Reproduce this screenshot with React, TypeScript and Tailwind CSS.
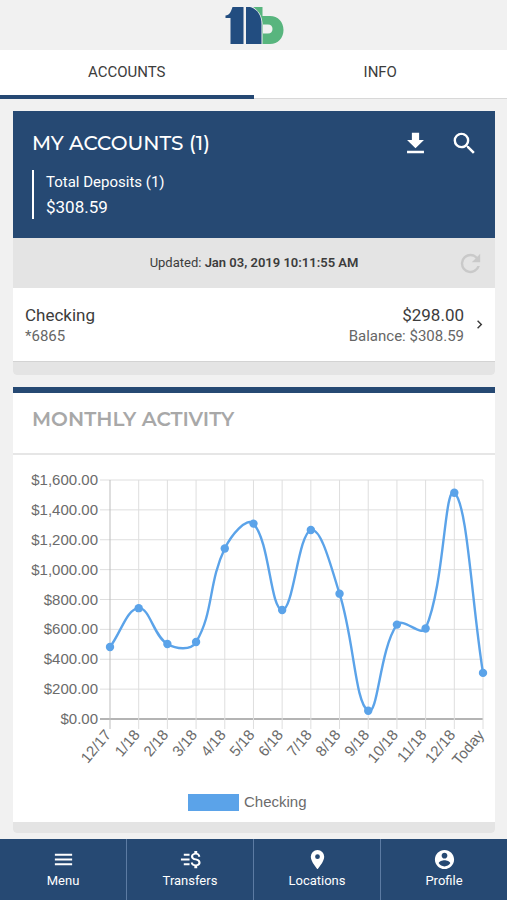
import type { ReactNode } from "react";

const activity = [
  { label: "12/17", value: 482 },
  { label: "1/18", value: 742 },
  { label: "2/18", value: 502 },
  { label: "3/18", value: 515 },
  { label: "4/18", value: 1141 },
  { label: "5/18", value: 1308 },
  { label: "6/18", value: 730 },
  { label: "7/18", value: 1265 },
  { label: "8/18", value: 839 },
  { label: "9/18", value: 55 },
  { label: "10/18", value: 632 },
  { label: "11/18", value: 606 },
  { label: "12/18", value: 1515 },
  { label: "Today", value: 308.59 },
];

const ticks = [1600, 1400, 1200, 1000, 800, 600, 400, 200, 0];

const plot = { left: 97, right: 470, top: 25, bottom: 264 };

const xAt = (i: number) => plot.left + (i * (plot.right - plot.left)) / (activity.length - 1);
const yAt = (v: number) => plot.bottom - (v / 1600) * (plot.bottom - plot.top);

const points = activity.map((d, i) => ({ x: xAt(i), y: yAt(d.value) }));

function smoothPath(pts: { x: number; y: number }[], tension = 0.4) {
  const controls = pts.map((cur, i) => {
    const prev = pts[i - 1] ?? cur;
    const next = pts[i + 1] ?? cur;
    const d01 = Math.hypot(cur.x - prev.x, cur.y - prev.y);
    const d12 = Math.hypot(next.x - cur.x, next.y - cur.y);
    const fa = (tension * d01) / (d01 + d12);
    const fb = (tension * d12) / (d01 + d12);
    return {
      inX: cur.x - fa * (next.x - prev.x),
      inY: cur.y - fa * (next.y - prev.y),
      outX: cur.x + fb * (next.x - prev.x),
      outY: cur.y + fb * (next.y - prev.y),
    };
  });
  return pts
    .map((p, i) => {
      if (i === 0) return `M${p.x} ${p.y}`;
      const a = controls[i - 1];
      const b = controls[i];
      return `C${a.outX} ${a.outY} ${b.inX} ${b.inY} ${p.x} ${p.y}`;
    })
    .join(" ");
}

function Icon({ className, children }: { className: string; children: ReactNode }) {
  return (
    <svg viewBox="0 0 24 24" fill="currentColor" className={className} aria-hidden="true">
      {children}
    </svg>
  );
}

function Logo() {
  return (
    <svg viewBox="0 0 60 38" className="h-[38px] w-[60px]" role="img" aria-label="11b">
      <path fill="#58b57e" fillRule="evenodd" d="M29 1h9.500v9H46c8 0 13.500 6 13.500 14S54 38 46 38h-7.500V17C38 9 34 4 29 1zM39 18.500v9h5c3 0 4.500-2 4.500-4.500s-1.500-4.500-4.500-4.500z" />
      <path fill="#224d80" d="M12 1h7.500v37H6.500V12H1.500V9.500C5.500 9 7 6 8.500 1z" />
      <path fill="#224d80" d="M22 1h4c7 2 11.500 8 11.500 17v20H22z" />
    </svg>
  );
}

function ActivityChart() {
  return (
    <svg viewBox="0 0 482 367" className="block w-full font-['Liberation_Sans',Arial,sans-serif] text-[15px]" role="img" aria-label="Monthly activity">
      {ticks.map((t) => (
        <g key={t}>
          <line
            x1={plot.left - 10}
            x2={plot.right}
            y1={yAt(t)}
            y2={yAt(t)}
            stroke={t === 0 ? "#b4b4b4" : "#dedede"}
            strokeWidth={t === 0 ? 2 : 1}
          />
          <text x={85} y={yAt(t) + 5} textAnchor="end" fill="#6b6b6b">
            {`$${t.toLocaleString("en-US")}.00`}
          </text>
        </g>
      ))}
      {points.map((p, i) => (
        <g key={activity[i].label}>
          <line x1={p.x} x2={p.x} y1={plot.top} y2={plot.bottom + 10} stroke={i === 0 ? "#bdbdbd" : "#dedede"} />
          <text
            transform={`translate(${p.x - 2} ${plot.bottom + 13}) rotate(-50)`}
            y={5}
            textAnchor="end"
            fill="#6b6b6b"
          >
            {activity[i].label}
          </text>
        </g>
      ))}
      <path d={smoothPath(points)} fill="none" stroke="#5ba3e9" strokeWidth="2.4" />
      {points.map((p) => (
        <circle key={p.x} cx={p.x} cy={p.y} r="4.2" fill="#5ba3e9" />
      ))}
      <rect x="175" y="339" width="51" height="17" fill="#5ba3e9" />
      <text x="231" y="352" fill="#6b6b6b">Checking</text>
    </svg>
  );
}

function NavItem({ label, children }: { label: string; children: ReactNode }) {
  return (
    <a href="#" className="flex flex-1 flex-col items-center border-l border-[#5c7ba3] pt-[9px] first:border-l-0">
      <Icon className="size-[23px]">{children}</Icon>
      <span className="text-[13px] leading-5">{label}</span>
    </a>
  );
}

export default function App() {
  return (
    <div className="flex min-h-screen flex-col bg-[#f1f1f1] font-[Roboto,sans-serif] text-[#3c3c3c]">
      <header className="flex h-[50px] items-center justify-center">
        <Logo />
      </header>

      <nav className="flex h-[49px] border-b border-[#d8d8d8] bg-white text-[15px]">
        <a href="#" className="-mb-px flex flex-1 items-center justify-center border-b-4 border-[#254873]">
          ACCOUNTS
        </a>
        <a href="#" className="-mb-px flex flex-1 items-center justify-center border-b-4 border-transparent">
          INFO
        </a>
      </nav>

      <main className="flex flex-1 flex-col gap-3 pt-3 pr-3 pb-[6px] pl-[13px]">
        <section className="overflow-hidden rounded-b bg-white">
          <div className="h-[127px] bg-[#264973] pt-[17px] pr-4 pl-[19px] text-white">
            <div className="flex items-center justify-between">
              <h1 className="font-[Montserrat,Inter,sans-serif] text-[20px] leading-[30px] font-medium">MY ACCOUNTS (1)</h1>
              <div className="flex gap-5">
                <button aria-label="Download">
                  <Icon className="size-[29px]">
                    <path d="M19 9h-4V3H9v6H5l7 7 7-7zM5 18v2h14v-2H5z" />
                  </Icon>
                </button>
                <button aria-label="Search">
                  <Icon className="size-[29px]">
                    <path d="M15.5 14h-.79l-.28-.27A6.47 6.47 0 0 0 16 9.5 6.5 6.5 0 1 0 9.5 16c1.61 0 3.09-.59 4.23-1.57l.27.28v.79l5 4.99L20.49 19l-4.99-5zm-6 0C7.01 14 5 11.99 5 9.5S7.01 5 9.5 5 14 7.01 14 9.5 11.99 14 9.5 14z" />
                  </Icon>
                </button>
              </div>
            </div>
            <div className="mt-3 border-l-2 border-white pl-3">
              <p className="text-[15px] leading-[25px]">Total Deposits (1)</p>
              <p className="text-[17px] leading-6">$308.59</p>
            </div>
          </div>

          <div className="flex h-[50px] items-center bg-[#e4e4e4] pr-[10px] pl-[39px]">
            <p className="flex-1 text-center text-[13px]">
              Updated: <b className="font-semibold">Jan 03, 2019 10:11:55 AM</b>
            </p>
            <button aria-label="Refresh" className="text-[#c9c9c9]">
              <Icon className="size-[29px]">
                <path d="M17.65 6.35A7.96 7.96 0 0 0 12 4a8 8 0 1 0 7.73 10h-2.08A6 6 0 1 1 12 6c1.66 0 3.14.69 4.22 1.78L13 11h7V4l-2.35 2.35z" />
              </Icon>
            </button>
          </div>

          <a href="#" className="flex h-[73px] items-center pr-[7px] pl-3">
            <div className="flex-1">
              <p className="text-[17px] leading-[22px]">Checking</p>
              <p className="text-[15px] leading-5 text-[#666]">*6865</p>
            </div>
            <div className="text-right">
              <p className="text-[17px] leading-[22px]">$298.00</p>
              <p className="text-[15px] leading-5 text-[#666]">Balance: $308.59</p>
            </div>
            <Icon className="ml-[7px] size-[17px]">
              <path d="M10 6 8.59 7.41 13.17 12l-4.58 4.59L10 18l6-6z" />
            </Icon>
          </a>
          <div className="h-[14px] border-t border-[#d3d3d3] bg-[#e4e4e4]" />
        </section>

        <section className="overflow-hidden rounded-b border-t-[6px] border-[#264973] bg-white">
          <h2 className="h-[62px] border-b-2 border-[#e6e6e6] px-[19px] pt-[11px] font-[Montserrat,Inter,sans-serif] text-[20px] leading-[30px] font-semibold text-[#a8a8a8]">
            MONTHLY ACTIVITY
          </h2>
          <ActivityChart />
          <div className="h-[11px] bg-[#e4e4e4]" />
        </section>
      </main>

      <nav className="sticky bottom-0 flex h-[61px] bg-[#264973] text-white">
        <NavItem label="Menu">
          <path d="M3 18h18v-2H3v2zm0-5h18v-2H3v2zm0-7v2h18V6H3z" />
        </NavItem>
        <NavItem label="Transfers">
          <path d="M17.8 10.9c-2.27-.59-3-1.2-3-2.15 0-1.09 1.01-1.85 2.7-1.85 1.78 0 2.44.85 2.5 2.1h2.21c-.07-1.72-1.12-3.3-3.21-3.81V3h-3v2.16c-1.94.42-3.5 1.68-3.5 3.61 0 2.31 1.91 3.46 4.7 4.13 2.5.6 3 1.48 3 2.41 0 .69-.49 1.79-2.7 1.79-2.06 0-2.87-.92-2.98-2.1h-2.2c.12 2.19 1.76 3.42 3.68 3.83V21h3v-2.15c1.95-.37 3.5-1.5 3.5-3.55 0-2.84-2.43-3.81-4.7-4.4zM5 6h6v2H5zM2 11h9v2H2zM5 16h6v2H5z" />
        </NavItem>
        <NavItem label="Locations">
          <path d="M12 2a7 7 0 0 0-7 7c0 5.25 7 13 7 13s7-7.75 7-13a7 7 0 0 0-7-7zm0 9.5a2.5 2.5 0 1 1 0-5 2.5 2.5 0 0 1 0 5z" />
        </NavItem>
        <NavItem label="Profile">
          <path d="M12 2C6.48 2 2 6.48 2 12s4.48 10 10 10 10-4.48 10-10S17.52 2 12 2zm0 3c1.66 0 3 1.34 3 3s-1.34 3-3 3-3-1.34-3-3 1.34-3 3-3zm0 14.2c-2.5 0-4.71-1.28-6-3.22.03-1.99 4-3.08 6-3.08 1.99 0 5.97 1.09 6 3.08-1.29 1.94-3.5 3.22-6 3.22z" />
        </NavItem>
      </nav>
    </div>
  );
}
